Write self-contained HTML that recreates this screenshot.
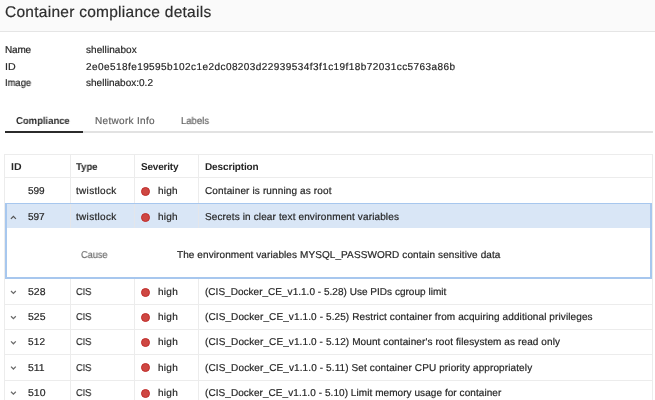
<!DOCTYPE html>
<html><head><meta charset="utf-8">
<style>
*{box-sizing:border-box;margin:0;padding:0}
html,body{width:655px;height:400px;overflow:hidden;background:#fff}
body{font-family:"Liberation Sans",sans-serif;color:#262626;position:relative}
.hdr{position:absolute;left:0;top:0;width:655px;height:32px;background:#fafafa;border-bottom:1px solid #e5e5e5}
.t{position:absolute;white-space:nowrap;will-change:transform;text-rendering:geometricPrecision;-webkit-text-stroke:0.2px currentColor}
.hl{position:absolute;left:5px;width:647px;height:1px;background:#ececec}
.vl{position:absolute;width:1px;background:#ececec}
.dot{position:absolute;left:140.5px;width:9px;height:9px;border-radius:50%;background:#ce4742;border:1px solid #c02c2a}
.chev{position:absolute;left:11px}
</style></head><body>
<div class="hdr"></div>
<div style="position:absolute;left:5px;top:131px;width:648px;height:2px;background:#e2e2e2"></div>
<div style="position:absolute;left:5px;top:131px;width:78px;height:2px;background:#2b2b2b"></div>
<div style="position:absolute;left:4px;top:154px;width:649px;height:260px;border:1px solid #ececec"></div>
<div class="hl" style="top:177px"></div>
<div class="vl" style="left:70px;top:155px;height:48px"></div>
<div class="vl" style="left:70px;top:279px;height:130px"></div>
<div class="vl" style="left:134px;top:155px;height:48px"></div>
<div class="vl" style="left:134px;top:279px;height:130px"></div>
<div class="vl" style="left:198px;top:155px;height:48px"></div>
<div class="vl" style="left:198px;top:279px;height:130px"></div>
<div style="position:absolute;left:5px;top:203px;width:647px;height:25px;background:#d9e6f6"></div>
<div class="vl" style="left:70px;top:204px;height:24px;background:#e4e6ea"></div>
<div class="vl" style="left:134px;top:204px;height:24px;background:#e4e6ea"></div>
<div class="vl" style="left:198px;top:204px;height:24px;background:#e4e6ea"></div>
<div style="position:absolute;left:5px;top:203px;width:647px;height:76px;border:1px solid #a7c7ee;border-width:1px 2px 2px 2px"></div>
<div class="hl" style="top:303.9px"></div>
<div class="hl" style="top:329.1px"></div>
<div class="hl" style="top:354.3px"></div>
<div class="hl" style="top:379.5px"></div>
<div class="dot" style="top:186.8px"></div>
<div class="dot" style="top:212.8px"></div>
<div class="dot" style="top:287.8px"></div>
<div class="dot" style="top:313.0px"></div>
<div class="dot" style="top:338.2px"></div>
<div class="dot" style="top:363.4px"></div>
<div class="dot" style="top:388.6px"></div>
<svg style="position:absolute;left:0;top:0" width="655" height="400">
<path d="M10.9 218.9 L13.4 216.3 L15.9 218.9" fill="none" stroke="#555" stroke-width="1.25"/>
<path d="M11 291.0 L13.4 293.4 L15.8 291.0" fill="none" stroke="#6a6a6a" stroke-width="1.25"/>
<path d="M11 316.2 L13.4 318.6 L15.8 316.2" fill="none" stroke="#6a6a6a" stroke-width="1.25"/>
<path d="M11 341.4 L13.4 343.8 L15.8 341.4" fill="none" stroke="#6a6a6a" stroke-width="1.25"/>
<path d="M11 366.6 L13.4 369.0 L15.8 366.6" fill="none" stroke="#6a6a6a" stroke-width="1.25"/>
<path d="M11 391.8 L13.4 394.2 L15.8 391.8" fill="none" stroke="#6a6a6a" stroke-width="1.25"/>
</svg>
<div class="t" style="left:5.00px;top:5px;font-size:15.5px;line-height:15.5px;letter-spacing:0.264px;color:#2d2d2d">Container compliance details</div>
<div class="t" style="left:5.00px;top:46px;font-size:10.0px;line-height:10.0px;letter-spacing:-0.204px">Name</div>
<div class="t" style="left:5.00px;top:63px;font-size:10.0px;line-height:10.0px;transform:scaleX(1.0636);transform-origin:0 0">ID</div>
<div class="t" style="left:5.00px;top:79px;font-size:10.0px;line-height:10.0px;transform:scaleX(0.9387);transform-origin:0 0">Image</div>
<div class="t" style="left:85.60px;top:46px;font-size:10.0px;line-height:10.0px;letter-spacing:0.062px">shellinabox</div>
<div class="t" style="left:85.50px;top:63px;font-size:10.0px;line-height:10.0px;letter-spacing:0.430px">2e0e518fe19595b102c1e2dc08203d22939534f3f1c19f18b72031cc5763a86b</div>
<div class="t" style="left:85.60px;top:79px;font-size:10.0px;line-height:10.0px;letter-spacing:0.018px">shellinabox:0.2</div>
<div class="t" style="left:16.40px;top:117px;font-size:10.0px;line-height:10.0px;transform:scaleX(0.9489);transform-origin:0 0;font-weight:700;-webkit-text-stroke:0;color:#2b2b2b">Compliance</div>
<div class="t" style="left:95.40px;top:117px;font-size:10.0px;line-height:10.0px;letter-spacing:0.321px;color:#636363">Network Info</div>
<div class="t" style="left:180.70px;top:117px;font-size:10.0px;line-height:10.0px;transform:scaleX(0.9502);transform-origin:0 0;color:#636363">Labels</div>
<div class="t" style="left:11.10px;top:163px;font-size:10.0px;line-height:10.0px;transform:scaleX(1.0534);transform-origin:0 0;font-weight:700;-webkit-text-stroke:0">ID</div>
<div class="t" style="left:76.30px;top:163px;font-size:10.0px;line-height:10.0px;transform:scaleX(0.9550);transform-origin:0 0;font-weight:700;-webkit-text-stroke:0">Type</div>
<div class="t" style="left:140.70px;top:163px;font-size:10.0px;line-height:10.0px;letter-spacing:-0.193px;font-weight:700;-webkit-text-stroke:0">Severity</div>
<div class="t" style="left:205.20px;top:163px;font-size:10.0px;line-height:10.0px;letter-spacing:-0.130px;font-weight:700;-webkit-text-stroke:0">Description</div>
<div class="t" style="left:28.40px;top:187px;font-size:10.0px;line-height:10.0px;letter-spacing:-0.012px">599</div>
<div class="t" style="left:76.30px;top:187px;font-size:10.0px;line-height:10.0px;letter-spacing:0.302px">twistlock</div>
<div class="t" style="left:158.40px;top:187px;font-size:10.0px;line-height:10.0px;letter-spacing:0.218px">high</div>
<div class="t" style="left:204.80px;top:187px;font-size:10.0px;line-height:10.0px;letter-spacing:0.135px">Container is running as root</div>
<div class="t" style="left:28.40px;top:213px;font-size:10.0px;line-height:10.0px;letter-spacing:-0.012px">597</div>
<div class="t" style="left:76.30px;top:213px;font-size:10.0px;line-height:10.0px;letter-spacing:0.302px">twistlock</div>
<div class="t" style="left:158.40px;top:213px;font-size:10.0px;line-height:10.0px;letter-spacing:0.218px">high</div>
<div class="t" style="left:205.00px;top:213px;font-size:10.0px;line-height:10.0px;letter-spacing:0.131px">Secrets in clear text environment variables</div>
<div class="t" style="left:80.80px;top:251px;font-size:10.0px;line-height:10.0px;transform:scaleX(0.9201);transform-origin:0 0;color:#707070">Cause</div>
<div class="t" style="left:176.90px;top:251px;font-size:10.0px;line-height:10.0px;letter-spacing:0.091px">The environment variables MYSQL_PASSWORD contain sensitive data</div>
<div class="t" style="left:28.20px;top:288px;font-size:10.0px;line-height:10.0px;transform:scaleX(1.0454);transform-origin:0 0">528</div>
<div class="t" style="left:76.40px;top:288px;font-size:10.0px;line-height:10.0px;transform:scaleX(0.9176);transform-origin:0 0">CIS</div>
<div class="t" style="left:158.40px;top:288px;font-size:10.0px;line-height:10.0px;letter-spacing:0.285px">high</div>
<div class="t" style="left:204.70px;top:288px;font-size:10.0px;line-height:10.0px;letter-spacing:0.024px">(CIS_Docker_CE_v1.1.0 - 5.28) Use PIDs cgroup limit</div>
<div class="t" style="left:28.20px;top:313px;font-size:10.0px;line-height:10.0px;transform:scaleX(1.0454);transform-origin:0 0">525</div>
<div class="t" style="left:76.40px;top:313px;font-size:10.0px;line-height:10.0px;transform:scaleX(0.9176);transform-origin:0 0">CIS</div>
<div class="t" style="left:158.40px;top:313px;font-size:10.0px;line-height:10.0px;letter-spacing:0.285px">high</div>
<div class="t" style="left:204.70px;top:313px;font-size:10.0px;line-height:10.0px;letter-spacing:0.108px">(CIS_Docker_CE_v1.1.0 - 5.25) Restrict container from acquiring additional privileges</div>
<div class="t" style="left:28.20px;top:338px;font-size:10.0px;line-height:10.0px;letter-spacing:0.238px">512</div>
<div class="t" style="left:76.40px;top:338px;font-size:10.0px;line-height:10.0px;transform:scaleX(0.9176);transform-origin:0 0">CIS</div>
<div class="t" style="left:158.40px;top:338px;font-size:10.0px;line-height:10.0px;letter-spacing:0.285px">high</div>
<div class="t" style="left:204.70px;top:338px;font-size:10.0px;line-height:10.0px;letter-spacing:0.106px">(CIS_Docker_CE_v1.1.0 - 5.12) Mount container's root filesystem as read only</div>
<div class="t" style="left:28.20px;top:364px;font-size:10.0px;line-height:10.0px;transform:scaleX(1.0378);transform-origin:0 0">511</div>
<div class="t" style="left:76.40px;top:364px;font-size:10.0px;line-height:10.0px;transform:scaleX(0.9176);transform-origin:0 0">CIS</div>
<div class="t" style="left:158.40px;top:364px;font-size:10.0px;line-height:10.0px;letter-spacing:0.285px">high</div>
<div class="t" style="left:204.70px;top:364px;font-size:10.0px;line-height:10.0px;letter-spacing:0.112px">(CIS_Docker_CE_v1.1.0 - 5.11) Set container CPU priority appropriately</div>
<div class="t" style="left:28.20px;top:389px;font-size:10.0px;line-height:10.0px;transform:scaleX(1.0454);transform-origin:0 0">510</div>
<div class="t" style="left:76.40px;top:389px;font-size:10.0px;line-height:10.0px;transform:scaleX(0.9176);transform-origin:0 0">CIS</div>
<div class="t" style="left:158.40px;top:389px;font-size:10.0px;line-height:10.0px;letter-spacing:0.285px">high</div>
<div class="t" style="left:204.70px;top:389px;font-size:10.0px;line-height:10.0px;letter-spacing:0.064px">(CIS_Docker_CE_v1.1.0 - 5.10) Limit memory usage for container</div>
</body></html>
